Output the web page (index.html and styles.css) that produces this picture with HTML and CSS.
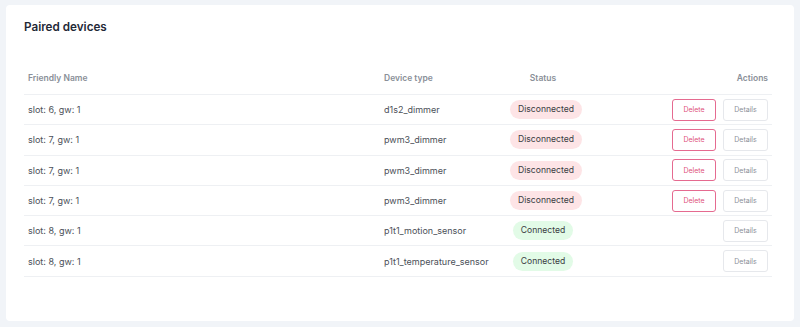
FILE: index.html
```html
<!DOCTYPE html>
<html>

<head>
    <title>Paired devices</title>
    <link rel="stylesheet" href="styles.css">
</head>

<body>
    <div class="card">
        <h2>Paired devices</h2>
        <table>
            <thead>
                <tr>
                    <th class="name">Friendly Name</th>
                    <th class="type">Device type</th>
                    <th class="status">Status</th>
                    <th class="actions">Actions</th>
                </tr>
            </thead>
            <tbody>
                <tr>
                    <td>slot: 6, gw: 1</td>
                    <td>d1s2_dimmer</td>
                    <td class="status"><span class="badge off">Disconnected</span></td>
                    <td class="actions"><button class="btn delete">Delete</button><button class="btn">Details</button></td>
                </tr>
                <tr>
                    <td>slot: 7, gw: 1</td>
                    <td>pwm3_dimmer</td>
                    <td class="status"><span class="badge off">Disconnected</span></td>
                    <td class="actions"><button class="btn delete">Delete</button><button class="btn">Details</button></td>
                </tr>
                <tr>
                    <td>slot: 7, gw: 1</td>
                    <td>pwm3_dimmer</td>
                    <td class="status"><span class="badge off">Disconnected</span></td>
                    <td class="actions"><button class="btn delete">Delete</button><button class="btn">Details</button></td>
                </tr>
                <tr>
                    <td>slot: 7, gw: 1</td>
                    <td>pwm3_dimmer</td>
                    <td class="status"><span class="badge off">Disconnected</span></td>
                    <td class="actions"><button class="btn delete">Delete</button><button class="btn">Details</button></td>
                </tr>
                <tr>
                    <td>slot: 8, gw: 1</td>
                    <td>p1t1_motion_sensor</td>
                    <td class="status"><span class="badge on">Connected</span></td>
                    <td class="actions"><button class="btn">Details</button></td>
                </tr>
                <tr>
                    <td>slot: 8, gw: 1</td>
                    <td>p1t1_temperature_sensor</td>
                    <td class="status"><span class="badge on">Connected</span></td>
                    <td class="actions"><button class="btn">Details</button></td>
                </tr>
            </tbody>
        </table>
    </div>
</body>

</html>
```

FILE: styles.css
```css
body {
    background-color: #f1f4f8;
    font-family: 'Inter', 'Noto Sans', sans-serif;
    margin: 0;
    padding: 5px 6px 6px;
}

.card {
    background-color: white;
    border-radius: 4px;
    height: 316px;
    box-sizing: border-box;
    padding: 14px 22px 0 18px;
}

h2 {
    font-size: 11.7px;
    font-weight: 600;
    color: #1f2937;
    margin: 0;
    line-height: 16px;
}

table {
    width: 100%;
    table-layout: fixed;
    border-collapse: collapse;
    margin-top: 27px;
}

th,
td {
    font-size: 9px;
    padding: 0 4px;
    text-align: left;
    border-bottom: 1px solid #eef0f3;
    height: 29.3px;
}

th {
    font-size: 8.5px;
    font-weight: 600;
    color: #8a8f98;
    height: 32px;
    vertical-align: middle;
}

td {
    color: #4b5058;
}

th.name {
    width: 348px;
}

th.type {
    width: 118px;
}

th.status {
    width: 66px;
}

.status {
    text-align: center;
}

th.actions,
td.actions {
    text-align: right;
}

.badge {
    display: inline-block;
    padding: 4px 8px 5px;
    border-radius: 10px;
    font-size: 8.6px;
    color: #3a3d42;
    line-height: 10px;
    white-space: nowrap;
}

.badge.off {
    background-color: #fde4e6;
}

.badge.on {
    background-color: #e2fbe7;
}

.btn {
    font-family: inherit;
    font-size: 7px;
    color: #8a8f98;
    background: white;
    border: 1px solid #e6e8ec;
    border-radius: 3px;
    height: 22px;
    width: 45px;
    margin-left: 7px;
    padding: 0;
}

.btn.delete {
    color: #e0507c;
    border-color: #e56a90;
    width: 44px;
}
```
